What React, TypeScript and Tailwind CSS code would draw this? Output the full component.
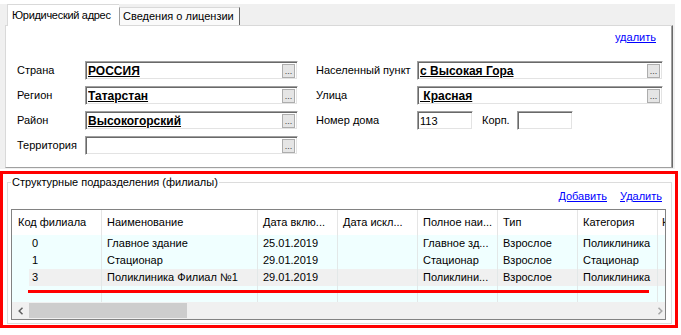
import React from "react";

type Col = { w: string; pl: string; dpl: string; h: string; last?: boolean };

const cols: Col[] = [
  { w: "w-[90px]", pl: "pl-[6px]", dpl: "pl-[20px]", h: "Код филиала" },
  { w: "w-[156px]", pl: "pl-[5px]", dpl: "pl-[5px]", h: "Наименование" },
  { w: "w-[80px]", pl: "pl-[5px]", dpl: "pl-[5px]", h: "Дата вклю..." },
  { w: "w-[80px]", pl: "pl-[5px]", dpl: "pl-[5px]", h: "Дата искл..." },
  { w: "w-[80px]", pl: "pl-[5px]", dpl: "pl-[5px]", h: "Полное наи..." },
  { w: "w-[80px]", pl: "pl-[5px]", dpl: "pl-[5px]", h: "Тип" },
  { w: "w-[80px]", pl: "pl-[5px]", dpl: "pl-[5px]", h: "Категория" },
  { w: "w-[7px]", pl: "pl-[4px]", dpl: "pl-[4px]", h: "Код", last: true },
];

const rows: { cells: string[]; sel?: boolean }[] = [
  { cells: ["0", "Главное здание", "25.01.2019", "", "Главное зд...", "Взрослое", "Поликлиника", ""] },
  { cells: ["1", "Стационар", "29.01.2019", "", "Стационар", "Взрослое", "Стационар", ""] },
  { cells: ["3", "Поликлиника Филиал №1", "29.01.2019", "", "Поликлини...", "Взрослое", "Поликлиника", ""], sel: true },
];

function Inp({ w, children, btn }: { w: string; children?: React.ReactNode; btn?: boolean }) {
  return (
    <div
      className={`${w} h-[19px] shrink-0 bg-white border border-t-[#a0a0a0] border-l-[#a0a0a0] border-r-[#ffffff] border-b-[#ffffff] shadow-[inset_1px_1px_0_#696969,inset_-1px_-1px_0_#e3e3e3] flex items-center pl-[2px] pr-[2px]`}
    >
      <div className="flex-1 overflow-hidden whitespace-pre leading-[14px]">{children}</div>
      {btn && (
        <div className="w-[13px] h-[14px] shrink-0 border border-[#adadad] bg-[#e5e5e5] flex items-end justify-center text-[9px] leading-[9px] pb-[1px] text-[#404040]">
          ...
        </div>
      )}
    </div>
  );
}

function Val({ children }: { children: React.ReactNode }) {
  return <span className="font-bold text-[12px] underline">{children}</span>;
}

function Chevron({ dir, color }: { dir: "l" | "r"; color: string }) {
  return (
    <svg width="8" height="8" viewBox="0 0 8 8">
      <path
        d={dir === "l" ? "M5.5 0.8 L2.2 4 L5.5 7.2" : "M2.5 0.8 L5.8 4 L2.5 7.2"}
        fill="none"
        stroke={color}
        strokeWidth="1.5"
      />
    </svg>
  );
}

export default function App() {
  return (
    <div className="w-[681px] h-[335px] bg-white overflow-hidden font-['Liberation_Sans',Arial,sans-serif] text-[11px] leading-none text-black">
      {/* Tab control */}
      <div className="mt-[4px] w-[675px] bg-[#f0f0f0] pl-[5px] pr-[2px] pb-[1px]">
        <div className="flex items-end h-[21px] pl-[2px]">
          <div className="relative z-10 h-[22px] -mb-px w-[112px] bg-white border-t border-l border-[#d9d9d9] flex items-center pl-[4px] pb-[1px] whitespace-nowrap tracking-[-0.3px]">
            Юридический адрес
          </div>
          <div className="h-[18px] w-[121px] bg-[#fafafa] border-t border-l border-r border-t-[#d9d9d9] border-l-[#a0a0a0] border-r-[#696969] flex items-center pl-[3px] whitespace-nowrap">
            Сведения о лицензии
          </div>
        </div>
        <div className="h-[143px] bg-white border border-t-[#d9d9d9] border-l-[#d9d9d9] border-r-[#696969] border-b-[#a0a0a0] shadow-[inset_-1px_0_0_#a0a0a0]">
          <div className="flex justify-end pr-[16px] pt-[6px] h-[24px]">
            <span className="text-[#0000ff] underline">удалить</span>
          </div>
          <div className="mt-[11px] flex flex-col gap-[6px] pl-[11px]">
            <div className="flex items-center h-[19px]">
              <div className="w-[68px] shrink-0">Страна</div>
              <Inp w="w-[213px]" btn>
                <Val>РОССИЯ</Val>
              </Inp>
              <div className="w-[18px] shrink-0" />
              <div className="w-[101px] shrink-0 whitespace-nowrap">Населенный пункт</div>
              <Inp w="w-[246px]" btn>
                <Val>с Высокая Гора</Val>
              </Inp>
            </div>
            <div className="flex items-center h-[19px]">
              <div className="w-[68px] shrink-0">Регион</div>
              <Inp w="w-[213px]" btn>
                <Val>Татарстан</Val>
              </Inp>
              <div className="w-[18px] shrink-0" />
              <div className="w-[101px] shrink-0">Улица</div>
              <Inp w="w-[246px]" btn>
                <Val>{" Красная"}</Val>
              </Inp>
            </div>
            <div className="flex items-center h-[19px]">
              <div className="w-[68px] shrink-0">Район</div>
              <Inp w="w-[213px]" btn>
                <Val>Высокогорский</Val>
              </Inp>
              <div className="w-[18px] shrink-0" />
              <div className="w-[101px] shrink-0">Номер дома</div>
              <Inp w="w-[56px]">113</Inp>
              <div className="w-[9px] shrink-0" />
              <div className="w-[35px] shrink-0">Корп.</div>
              <Inp w="w-[56px]" />
            </div>
            <div className="flex items-center h-[19px]">
              <div className="w-[68px] shrink-0">Территория</div>
              <Inp w="w-[213px]" btn />
            </div>
          </div>
        </div>
      </div>

      {/* Highlighted group box */}
      <div className="mt-[2px] w-[678px] h-[157px] border-[3px] border-[#ff0000] pl-[4px] pr-[3px]">
        <fieldset className="mt-[3px] h-[147px] border border-[#dcdcdc] px-[3px]">
          <legend className="px-[1px] leading-none">Структурные подразделения (филиалы)</legend>
          <div className="h-[17px] flex items-center justify-end gap-[13px] pr-[6px]">
            <span className="text-[#0000ff] underline">Добавить</span>
            <span className="text-[#0000ff] underline">Удалить</span>
          </div>
          <div className="relative mt-[4px] w-[655px] h-[111px] border border-[#828282] bg-[#f0ffff] flex flex-col overflow-hidden">
            <div className="h-[25px] shrink-0 bg-white flex">
              {cols.map((c, i) => (
                <div
                  key={i}
                  className={`${c.last ? "flex-1" : `${c.w} border-r border-[#e5e5e5]`} shrink-0 h-full flex items-center ${c.pl} pb-[1px] whitespace-nowrap overflow-hidden`}
                >
                  {c.h}
                </div>
              ))}
            </div>
            {rows.map((r, ri) => (
              <div key={ri} className="h-[17px] shrink-0 flex">
                {cols.map((c, i) => {
                  const base = `${c.last ? "flex-1" : `${c.w} border-r border-[#e3e8e8]`} shrink-0 h-full whitespace-nowrap overflow-hidden`;
                  if (r.sel && i === 0) {
                    return (
                      <div key={i} className={`${base} flex`}>
                        <div className="w-[17px] shrink-0 h-full" />
                        <div className="flex-1 h-full bg-[#f0f0f0] flex items-center pl-[3px]">{r.cells[i]}</div>
                      </div>
                    );
                  }
                  return (
                    <div key={i} className={`${base} flex items-center ${c.dpl} ${r.sel ? "bg-[#f0f0f0]" : ""}`}>
                      {r.cells[i]}
                    </div>
                  );
                })}
              </div>
            ))}
            <div className="h-[16px] shrink-0 flex">
              {cols.map((c, i) => (
                <div key={i} className={`${c.last ? "flex-1" : `${c.w} border-r border-[#e3e8e8]`} shrink-0 h-full`} />
              ))}
            </div>
            <div className="h-[17px] shrink-0 bg-[#f0f0f0] flex items-center">
              <div className="w-[17px] h-full flex items-center justify-center">
                <Chevron dir="l" color="#606060" />
              </div>
              <div className="w-[158px] h-[15px] bg-[#cdcdcd]" />
              <div className="flex-1" />
              <div className="w-[17px] h-full flex items-center justify-end pr-[1px]">
                <Chevron dir="r" color="#a6a6a6" />
              </div>
            </div>
            <div className="absolute left-[16px] top-[80px] w-[621px] h-[3px] bg-[#ff0000]" />
          </div>
        </fieldset>
      </div>
    </div>
  );
}
